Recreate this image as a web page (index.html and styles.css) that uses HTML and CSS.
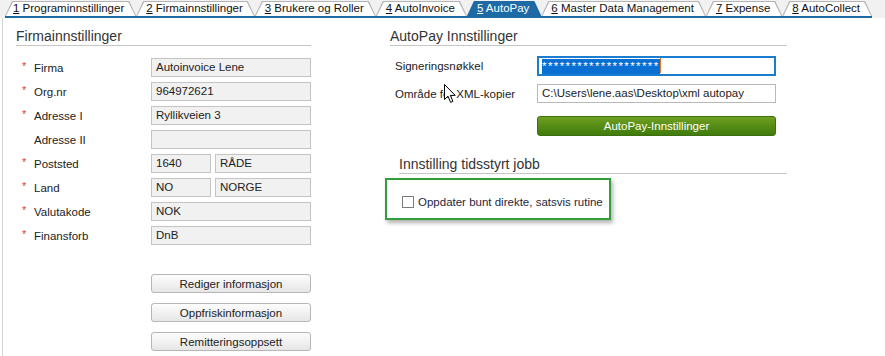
FILE: index.html
```html
<!DOCTYPE html>
<html lang="no">
<head>
  <meta charset="UTF-8" />
  <title>AutoPay</title>
  <link rel="stylesheet" href="styles.css">
</head>
<body>
  <div class="tabbar">
    <nav class="tabs">
      <a class="tab"><span><u>1</u> Programinnstillinger</span></a>
      <a class="tab"><span><u>2</u> Firmainnstillinger</span></a>
      <a class="tab"><span><u>3</u> Brukere og Roller</span></a>
      <a class="tab"><span><u>4</u> AutoInvoice</span></a>
      <a class="tab active"><span><u>5</u> AutoPay</span></a>
      <a class="tab"><span><u>6</u> Master Data Management</span></a>
      <a class="tab"><span><u>7</u> Expense</span></a>
      <a class="tab"><span><u>8</u> AutoCollect</span></a>
    </nav>
  </div>

  <div class="panel">
    <section class="col-left">
      <h2 class="heading">Firmainnstillinger</h2>
      <div class="form">
        <div class="row"><span class="req">*</span><span class="label">Firma</span><div class="field">Autoinvoice Lene</div></div>
        <div class="row"><span class="req">*</span><span class="label">Org.nr</span><div class="field">964972621</div></div>
        <div class="row"><span class="req">*</span><span class="label">Adresse I</span><div class="field">Ryllikveien 3</div></div>
        <div class="row"><span class="req"></span><span class="label">Adresse II</span><div class="field"></div></div>
        <div class="row"><span class="req">*</span><span class="label">Poststed</span><div class="pair"><div class="field small">1640</div><div class="field">RÅDE</div></div></div>
        <div class="row"><span class="req">*</span><span class="label">Land</span><div class="pair"><div class="field small">NO</div><div class="field">NORGE</div></div></div>
        <div class="row"><span class="req">*</span><span class="label">Valutakode</span><div class="field">NOK</div></div>
        <div class="row"><span class="req">*</span><span class="label">Finansforb</span><div class="field">DnB</div></div>
      </div>
      <div class="buttons">
        <button class="btn">Rediger informasjon</button>
        <button class="btn">Oppfriskinformasjon</button>
        <button class="btn">Remitteringsoppsett</button>
      </div>
    </section>

    <section class="col-right">
      <h2 class="heading">AutoPay Innstillinger</h2>
      <div class="rform">
        <div class="rrow"><span class="rlabel">Signeringsnøkkel</span><div class="field focus"><span class="sel">********************</span><span class="caret"></span></div></div>
        <div class="rrow"><span class="rlabel">Område for XML-kopier</span><div class="field white">C:\Users\lene.aas\Desktop\xml autopay</div></div>
        <div class="rrow"><span class="rlabel"></span><button class="btn-green">AutoPay-Innstillinger</button></div>
      </div>

      <h2 class="heading sub">Innstilling tidsstyrt jobb</h2>
      <div class="jobbox">
        <label class="check"><span class="box"></span>Oppdater bunt direkte, satsvis rutine</label>
      </div>

      <svg class="cursor" width="13" height="20" viewBox="0 0 13 20">
        <path d="M0.5 0.5 L0.5 15.5 L4 12.2 L6.6 18.4 L8.9 17.4 L6.4 11.4 L11.2 11.4 Z" fill="#fff" stroke="#000" stroke-width="1" stroke-linejoin="miter"/>
      </svg>
    </section>
  </div>
</body>
</html>
```

FILE: styles.css
```css
body { margin: 0; background: #fff; font-family: "Liberation Sans", Arial, sans-serif; font-size: 11.5px; color: #222; }

.tabbar { background: #f1f1f1; padding-top: 1px; }
.tabs { display: inline-flex; margin-left: 5px; border-bottom: 2px solid #1d6aa5; }
.tab { position: relative; display: block; height: 15px; line-height: 15px; padding: 0 12px 0 8px; font-size: 11.5px; color: #111; background: #b4b4b4; clip-path: polygon(7px 0, calc(100% - 7px) 0, 100% 100%, 0 100%); cursor: pointer; }
.tab::before { content: ""; position: absolute; top: 1px; bottom: 0; left: 1px; right: 1px; background: #fff; clip-path: polygon(7px 0, calc(100% - 7px) 0, 100% 100%, 0 100%); }
.tab + .tab { padding-left: 10px; }
.tab span { position: relative; }
.tab u { text-underline-offset: 1px; }
.tab.active { background: #1d6aa5; color: #fff; }
.tab.active::before { background: #1d6aa5; }

.panel { position: relative; display: flex; margin-left: 2px; border-left: 1px solid #d4d4d4; height: 338px; }

.heading { margin: 0; padding-top: 9px; font-size: 14px; font-weight: normal; line-height: 18px; color: #333; border-bottom: 1px solid #c6c6c6; }

.col-left { width: 295px; margin-left: 13px; }
.form { display: flex; flex-direction: column; gap: 5px; margin-top: 12px; }
.row { display: flex; align-items: center; height: 19px; }
.req { width: 6px; margin-left: 6px; margin-right: 6px; color: #e5392b; font-size: 11px; line-height: 10px; align-self: flex-start; padding-top: 3px; }
.label { width: 117px; }
.field { box-sizing: border-box; height: 19px; width: 160px; padding: 0 4px; line-height: 17px; background: #f1f1f1; border: 1px solid #c4c4c4; white-space: nowrap; overflow: hidden; }
.pair { display: flex; gap: 4px; width: 160px; }
.pair .field { flex: 1; width: auto; }
.pair .field.small { flex: none; width: 60px; }

.buttons { display: flex; flex-direction: column; gap: 10px; margin-top: 29px; margin-left: 135px; }
.btn { box-sizing: border-box; width: 160px; height: 19px; padding: 0; font: inherit; color: #222; background: linear-gradient(#fdfdfd, #e6e6e6); border: 1px solid #b6b6b6; border-radius: 3px; cursor: pointer; }

.col-right { position: relative; width: 397px; margin-left: 79px; }
.rform { display: flex; flex-direction: column; margin-top: 10px; }
.rrow { display: flex; align-items: center; }
.rrow + .rrow { margin-top: 8px; }
.rrow:last-child { margin-top: 13px; }
.rlabel { width: 142px; padding-left: 5px; }
.field.focus { position: relative; width: 239px; height: 20px; border: 2px solid #1a7dd0; background: #fff; padding: 0 3px; line-height: 16px; }
.sel { display: inline-block; background: #0a6fd2; color: #fff; letter-spacing: 1.4px; line-height: 15px; }
.caret { display: inline-block; width: 1px; height: 15px; background: #e07a22; vertical-align: top; }
.field.white { width: 239px; background: #fff; border-color: #b9b9b9; padding: 0 4px; }
.btn-green { width: 239px; height: 20px; padding: 0; font: inherit; color: #fff; background: linear-gradient(#6f9f20, #3f7b0c); border: 1px solid #3d6e10; border-radius: 3px; cursor: pointer; }

.heading.sub { margin-left: 9px; margin-top: 0; padding-top: 19px; }
.jobbox { box-sizing: border-box; width: 226px; height: 42px; margin-top: 4px; margin-left: -5px; padding: 16px 0 0 15px; border: 2px solid #2f9e3b; box-shadow: 2px 3px 4px rgba(0, 0, 0, 0.3); }
.check { display: flex; align-items: center; gap: 4px; color: #1f1f3d; }
.box { box-sizing: border-box; width: 12px; height: 12px; border: 1px solid #7c7c7c; background: #fff; }

.cursor { position: absolute; left: 54px; top: 66px; }
```
